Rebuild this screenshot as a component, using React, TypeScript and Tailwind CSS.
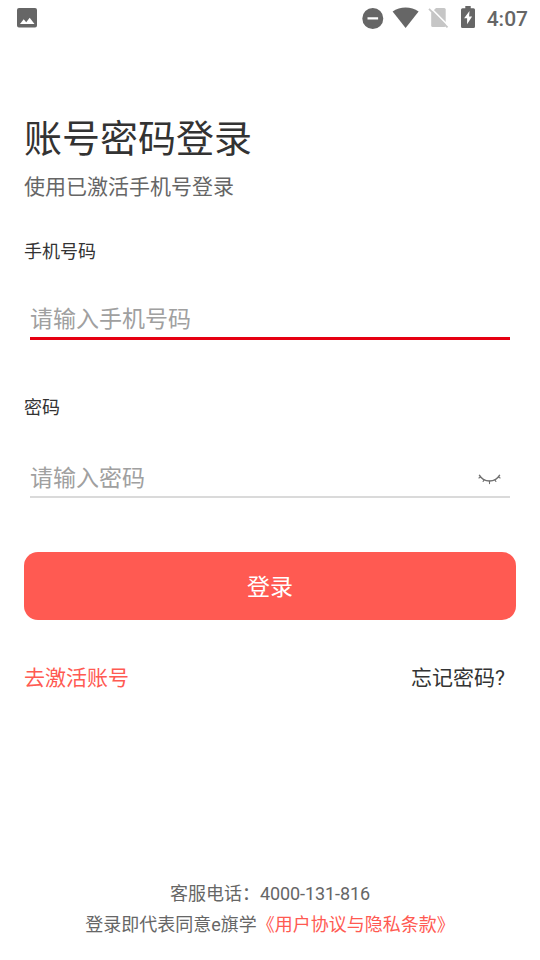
import { useState } from "react";

function StatusBar() {
  return (
    <header className="flex h-9 items-center justify-between pl-4 pr-3 text-[#666]">
      <svg width="22" height="22" viewBox="0 0 22 22" fill="currentColor">
        <path
          fillRule="evenodd"
          d="M3 1h16a2 2 0 0 1 2 2v15.500a2 2 0 0 1-2 2H3a2 2 0 0 1-2-2V3a2 2 0 0 1 2-2zM4 17h14.500l-4.800-6.300-3.500 4.600-2.500-3z"
        />
      </svg>

      <div className="flex items-center">
        {/* Do not disturb */}
        <svg width="22" height="22" viewBox="0 0 22 22" fill="currentColor">
          <path fillRule="evenodd" d="M10.800 1a10.500 10.500 0 1 0 0 21 10.500 10.500 0 0 0 0-21zM5.500 10.300h10.600v2.200H5.500z" />
        </svg>
        {/* Wifi */}
        <svg className="ml-2" width="28" height="22" viewBox="0 0 28 22" fill="currentColor">
          <path d="M.6 4.500C8-.9 19.200-.9 26.600 4.500L13.600 20.900z" />
        </svg>
        {/* No SIM */}
        <svg className="ml-2" width="22" height="22" viewBox="0 0 22 22">
          <path d="M8 1h8.200a1.500 1.500 0 0 1 1.500 1.500v16a1.500 1.500 0 0 1-1.500 1.500H4.700a1.500 1.500 0 0 1-1.500-1.500V5.800z" fill="#c6c6c6" />
          <path d="M2.200.500l19 19" stroke="#fff" strokeWidth="1.700" />
          <path d="M1 1.900l18.500 18.500" stroke="#c6c6c6" strokeWidth="1.700" />
        </svg>
        {/* Battery charging */}
        <svg className="mb-0.5 ml-2.5" width="16" height="22" viewBox="0 0 16 22" fill="currentColor">
          <path
            fillRule="evenodd"
            d="M5.300 0h5.400v2.200h2.800a1.500 1.500 0 0 1 1.500 1.500v16.800a1.500 1.500 0 0 1-1.500 1.500h-11A1.500 1.500 0 0 1 1 20.500V3.700a1.500 1.500 0 0 1 1.500-1.500h2.800zM9.500 4.900l-5.400 7.400h3v6l5-7.900h-3z"
          />
        </svg>
        <span className="ml-[11px] pt-0.5 text-[21px] font-medium leading-none">4:07</span>
      </div>
    </header>
  );
}

function ClosedEye() {
  return (
    <svg width="24" height="12" viewBox="0 0 24 12" fill="none" stroke="#707070" strokeLinecap="round">
      <path d="M2.500 1.300C7 8.800 18 8.800 22.500 1.300" strokeWidth="1.500" />
      <path d="M3.600 3L1.900 4M7.200 5.800L6.100 7.500M12.500 7v2.600M17.800 5.800l1.100 1.700M21.400 3l1.700 1" strokeWidth="1.100" />
    </svg>
  );
}

export default function App() {
  const [phone, setPhone] = useState("");
  const [password, setPassword] = useState("");
  const [visible, setVisible] = useState(false);

  return (
    <div className="flex h-screen flex-col bg-white font-['Roboto','Noto_Sans_CJK_SC',sans-serif] text-[#333]">
      <StatusBar />

      <main className="flex flex-col px-6 pt-[78px]">
        <h1 className="text-[38px] leading-[50px]">账号密码登录</h1>
        <p className="mt-[7px] text-[21px] leading-[32px] text-[#666]">使用已激活手机号登录</p>

        <label htmlFor="phone" className="mt-[37px] text-[18px] leading-[24px]">
          手机号码
        </label>
        <div className="mx-1.5 mt-9 flex h-[40px] border-b-[3px] border-[#e60012]">
          <input
            id="phone"
            type="tel"
            value={phone}
            onChange={(e) => setPhone(e.target.value)}
            placeholder="请输入手机号码"
            className="w-full pt-1 text-[23px] outline-none placeholder:text-[#a0a0a0]"
          />
        </div>

        <label htmlFor="password" className="mt-[56px] text-[18px] leading-[24px]">
          密码
        </label>
        <div className="mx-1.5 mt-[38px] flex h-[40px] items-center border-b-2 border-[#dadada]">
          <input
            id="password"
            type={visible ? "text" : "password"}
            value={password}
            onChange={(e) => setPassword(e.target.value)}
            placeholder="请输入密码"
            className="h-full min-w-0 flex-1 pt-0.5 text-[23px] outline-none placeholder:text-[#a0a0a0]"
          />
          <button onClick={() => setVisible(!visible)} aria-label="显示密码" className="mr-[9px] pt-1.5">
            <ClosedEye />
          </button>
        </div>

        <button className="mt-[54px] h-[68px] rounded-[14px] bg-[#ff5a52] pt-1 text-[23px] text-white">登录</button>

        <div className="mt-[42px] flex justify-between pr-[11px] text-[21px] leading-[32px]">
          <a href="#" className="text-[#ff5a52]">
            去激活账号
          </a>
          <a href="#">忘记密码?</a>
        </div>
      </main>

      <footer className="mt-auto pb-5 text-center text-[18px] leading-[31px] text-[#666]">
        <p>
          客服电话：<span className="tracking-[-0.08px]">4000-131-816</span>
        </p>
        <p>
          登录即代表同意e旗学
          <a href="#" className="text-[#ff5a52]">
            《用户协议与隐私条款》
          </a>
        </p>
      </footer>
    </div>
  );
}
